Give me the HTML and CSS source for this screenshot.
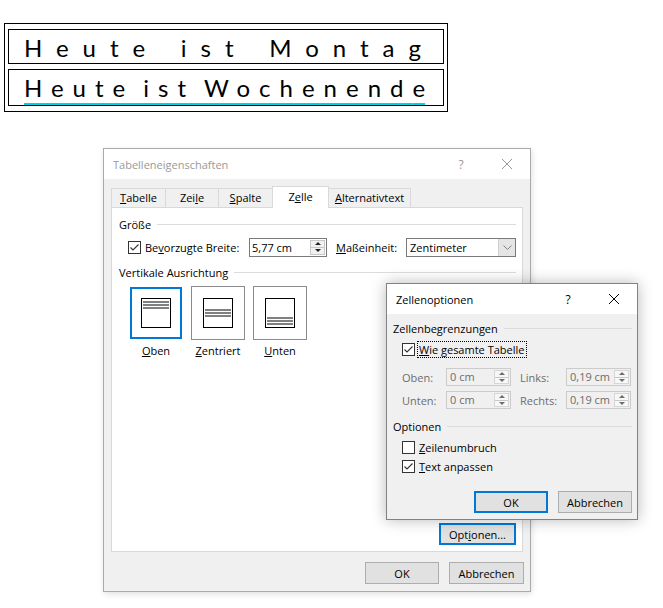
FILE: index.html
```html
<!DOCTYPE html>
<html lang="de">
<head>
<meta charset="utf-8">
<title>Tabelleneigenschaften</title>
<link rel="stylesheet" href="styles.css">
</head>
<body>
<table class="doc">
  <tr><td class="r1">Heute ist Monta<span class="tail">g</span></td></tr>
  <tr><td class="r2"><span class="ul">Heute ist Wochenend<span class="tail">e</span></span></td></tr>
</table>

<div class="dlg main">
  <div class="titlebar">
    <span class="title">Tabelleneigenschaften</span>
    <span class="tbtn help">?</span>
    <span class="tbtn close"><svg width="10" height="10" viewBox="0 0 10 10"><path d="M0 0L10 10M10 0L0 10" stroke="#999" stroke-width="1" fill="none"/></svg></span>
  </div>
  <div class="dbody">
    <div class="tabs">
      <div class="tab w55"><u>T</u>abelle</div>
      <div class="tab w54">Zei<u>l</u>e</div>
      <div class="tab w55"><u>S</u>palte</div>
      <div class="tab w57 sel">Z<u>e</u>lle</div>
      <div class="tab w83"><u>A</u>lternativtext</div>
    </div>
    <div class="panel">
      <div class="group first">Größe</div>
      <div class="sizerow">
        <span class="cb"><svg width="11" height="11" viewBox="0 0 11 11"><path d="M1.5 5.5L4 8L9.5 2.5" stroke="#333" stroke-width="1.1" fill="none"/></svg></span>
        <span class="lbl-breite">Be<u>v</u>orzugte Breite:</span>
        <span class="edit w78"><span class="val">5,77 cm</span><span class="spin"><i class="up"></i><i class="dn"></i></span></span>
        <span class="lbl-mass"><u>M</u>aßeinheit:</span>
        <span class="select"><span class="val">Zentimeter</span><span class="arrow"><svg width="9" height="5" viewBox="0 0 9 5"><path d="M0.5 0.5L4.5 4.5L8.5 0.5" stroke="#808080" stroke-width="1" fill="none"/></svg></span></span>
      </div>
      <div class="group second">Vertikale Ausrichtung</div>
      <div class="aligns">
        <div class="abtn sel"><div class="aicon top"><i></i><i></i><i></i></div></div>
        <div class="abtn"><div class="aicon mid"><i></i><i></i><i></i></div></div>
        <div class="abtn"><div class="aicon bot"><i></i><i></i><i></i></div></div>
        <div class="alabel"><u>O</u>ben</div>
        <div class="alabel"><u>Z</u>entriert</div>
        <div class="alabel"><u>U</u>nten</div>
      </div>
      <div class="btn default opt">Opt<u>i</u>onen...</div>
    </div>
    <div class="footer">
      <div class="btn w74">OK</div>
      <div class="btn w75">Abbrechen</div>
    </div>
  </div>
</div>

<div class="dlg sub">
  <div class="titlebar">
    <span class="title active">Zellenoptionen</span>
    <span class="tbtn help active">?</span>
    <span class="tbtn close"><svg width="10" height="10" viewBox="0 0 10 10"><path d="M0 0L10 10M10 0L0 10" stroke="#000" stroke-width="1" fill="none"/></svg></span>
  </div>
  <div class="sbody">
    <div class="group">Zellenbegrenzungen</div>
    <div class="cbrow focusrow">
      <span class="cb"><svg width="11" height="11" viewBox="0 0 11 11"><path d="M1.5 5.5L4 8L9.5 2.5" stroke="#333" stroke-width="1.1" fill="none"/></svg></span>
      <span class="focus"><u>W</u>ie gesamte Tabelle</span>
    </div>
    <div class="margins">
      <span class="ml">Oben:</span>
      <span class="edit dis"><span class="val">0 cm</span><span class="spin"><i class="up"></i><i class="dn"></i></span></span>
      <span class="ml ml2">Links:</span>
      <span class="edit dis"><span class="val">0,19 cm</span><span class="spin"><i class="up"></i><i class="dn"></i></span></span>
      <span class="ml">Unten:</span>
      <span class="edit dis"><span class="val">0 cm</span><span class="spin"><i class="up"></i><i class="dn"></i></span></span>
      <span class="ml ml2">Rechts:</span>
      <span class="edit dis"><span class="val">0,19 cm</span><span class="spin"><i class="up"></i><i class="dn"></i></span></span>
    </div>
    <div class="group g2">Optionen</div>
    <div class="cbrow r-wrap">
      <span class="cb"></span>
      <span class="cbl"><u>Z</u>eilenumbruch</span>
    </div>
    <div class="cbrow r-fit">
      <span class="cb"><svg width="11" height="11" viewBox="0 0 11 11"><path d="M1.5 5.5L4 8L9.5 2.5" stroke="#333" stroke-width="1.1" fill="none"/></svg></span>
      <span class="cbl"><u>T</u>ext anpassen</span>
    </div>
    <div class="sfooter">
      <div class="btn default w74">OK</div>
      <div class="btn w74">Abbrechen</div>
    </div>
  </div>
</div>
</body>
</html>
```

FILE: styles.css
```css
* { box-sizing: border-box; }
html, body { margin: 0; padding: 0; background: #fff; }
body {
  width: 663px;
  height: 608px;
  overflow: hidden;
  position: relative;
  font-family: "Open Sans", "Noto Sans", sans-serif;
  font-size: 11px;
  color: #000;
}
u { text-decoration: underline; text-underline-offset: 1px; }

/* Word document table */
.doc {
  margin: 23px 0 0 4px;
  width: 444px;
  border: 1px solid #000;
  border-spacing: 3px 5px;
  font-family: Lato, "Liberation Sans", sans-serif;
  font-size: 24px;
  color: #000;
}
.doc td { border: 1px solid #000; white-space: nowrap; }
.doc .r1 {
  padding: 2px 0 0 15px;
  line-height: 31px;
  letter-spacing: 14px;
  word-spacing: 1.5px;
}
.doc .r2 {
  padding: 3px 0 3px 15px;
  line-height: 29px;
  letter-spacing: 9px;
  word-spacing: -6px;
}
.doc .tail { letter-spacing: 0; }
.doc .ul {
  text-decoration: underline 2px #00d4e4;
  text-underline-offset: 6px;
  text-decoration-skip-ink: none;
}

/* dialogs */
.dlg { background: #f0f0f0; display: flex; flex-direction: column; }
.main {
  margin: 36px 0 0 103px;
  width: 428px;
  height: 444px;
  border: 1px solid #aaaaaa;
  box-shadow: 1px 2px 6px rgba(0,0,0,0.12);
}
.sub {
  position: absolute;
  left: 386px;
  top: 283px;
  width: 252px;
  height: 237px;
  border: 1px solid #828282;
  box-shadow: 0 0 14px rgba(0,0,0,0.28);
}
.titlebar {
  flex: none;
  height: 30px;
  background: #fff;
  display: flex;
  align-items: center;
}
.title { flex: 1; padding-left: 9px; color: #999; }
.title.active { color: #000; }
.tbtn {
  width: 46px;
  height: 30px;
  display: flex;
  align-items: center;
  justify-content: center;
  color: #999;
  font-size: 12px;
}
.tbtn.active { color: #000; }

.dbody { flex: 1; display: flex; flex-direction: column; padding: 7px 7px 7px 7px; }

/* tabs */
.tabs { display: flex; align-items: flex-end; height: 21px; position: relative; z-index: 1; flex: none; }
.tab {
  height: 19px;
  border: 1px solid #d9d9d9;
  border-bottom: none;
  background: #f0f0f0;
  margin-left: -1px;
  text-align: center;
  line-height: 18px;
}
.tab:first-child { margin-left: 0; }
.tab.sel {
  height: 22px;
  background: #fff;
  margin-bottom: -1px;
  position: relative;
  z-index: 2;
  line-height: 20px;
}
.w54 { width: 54px; }
.w55 { width: 55px; }
.w57 { width: 57px; }
.w74 { width: 74px; }
.w75 { width: 75px; }
.w78 { width: 78px; }
.w83 { width: 83px; }

.panel {
  flex: none;
  height: 345px;
  background: #fff;
  border: 1px solid #d9d9d9;
  display: flex;
  flex-direction: column;
  padding: 0 6px 6px 7px;
}

.group {
  display: flex;
  align-items: center;
  gap: 6px;
  height: 15px;
  line-height: 15px;
  flex: none;
}
.group::after { content: ""; flex: 1; height: 1px; background: #dcdcdc; }
.group.first { margin-top: 9px; }
.group.second { margin-top: 8px; }

.sizerow { display: flex; align-items: center; height: 20px; margin: 5px 0 0 9px; }
.cb {
  width: 13px;
  height: 13px;
  border: 1px solid #333;
  background: #fff;
  flex: none;
  display: flex;
  align-items: center;
  justify-content: center;
}
.lbl-breite { width: 104px; margin-left: 4px; }
.lbl-mass { width: 70px; margin-left: 9px; }

.edit {
  height: 19px;
  border: 1px solid #7a7a7a;
  background: #fff;
  display: flex;
  align-items: stretch;
}
.edit .val { flex: 1; padding-left: 2px; line-height: 17px; white-space: nowrap; }
.spin {
  width: 15px;
  margin: 1px 1px 1px 0;
  background: #f0f0f0;
  border: 1px solid #c8c8c8;
  display: flex;
  flex-direction: column;
}
.spin i {
  flex: 1;
  display: flex;
  align-items: center;
  justify-content: center;
}
.spin i + i { border-top: 1px solid #c8c8c8; }
.spin i::before {
  content: "";
  width: 0;
  height: 0;
  border-left: 3px solid transparent;
  border-right: 3px solid transparent;
}
.spin .up::before { border-bottom: 3px solid #222; }
.spin .dn::before { border-top: 3px solid #222; }

.select {
  width: 110px;
  height: 19px;
  border: 1px solid #7a7a7a;
  background: #fff;
  display: flex;
}
.select .val { flex: 1; padding-left: 3px; line-height: 17px; }
.select .arrow {
  width: 17px;
  background: #e5e5e5;
  border-left: 1px solid #cfcfcf;
  display: flex;
  align-items: center;
  justify-content: center;
}

/* vertical alignment buttons */
.aligns {
  display: grid;
  grid-template-columns: 54px 54px 54px;
  column-gap: 8px;
  row-gap: 3px;
  margin: 6px 0 0 10px;
}
.abtn {
  width: 54px;
  height: 54px;
  border: 1px solid #8c8c8c;
  display: flex;
  align-items: center;
  justify-content: center;
}
.abtn.sel { border-color: #fff; box-shadow: inset 0 0 0 2px #0078d7; }
.aicon {
  width: 30px;
  height: 30px;
  border: 1px solid #000;
  background: #fff;
  display: flex;
  flex-direction: column;
  gap: 1px;
  padding: 2px 1px;
}
.aicon.mid { justify-content: center; }
.aicon.bot { justify-content: flex-end; }
.aicon i { display: block; height: 2px; background: #808080; }
.alabel { text-align: center; line-height: 15px; }

/* buttons */
.btn {
  height: 22px;
  border: 1px solid #adadad;
  background: #e1e1e1;
  display: flex;
  align-items: center;
  justify-content: center;
  flex: none;
}
.btn.default { border: 2px solid #0078d7; }
.opt { width: 77px; margin-top: auto; align-self: flex-end; }
.footer { display: flex; justify-content: flex-end; gap: 10px; margin: 10px -1px 0 0; }

/* Zellenoptionen body */
.sbody { flex: 1; display: flex; flex-direction: column; padding: 7px 5px 6px 6px; }
.cbrow { display: flex; align-items: center; margin-left: 9px; flex: none; }
.focusrow { height: 18px; margin-top: 4px; }
.focus {
  margin-left: 2px;
  height: 17px;
  line-height: 15px;
  border: 1px dotted #000;
  padding: 0 2px 0 1px;
}
.margins {
  display: grid;
  grid-template-columns: 44px 65px 55px 65px;
  grid-auto-rows: 18px;
  row-gap: 5px;
  align-items: center;
  margin: 10px 0 0 9px;
}
.ml { color: #6d6d6d; }
.ml2 { padding-left: 9px; }
.edit.dis { height: 18px; border-color: #cccccc; background: #f0f0f0; color: #6d6d6d; }
.edit.dis .val { padding-left: 3px; line-height: 16px; }
.edit.dis .spin { background: #f7f7f7; border-color: #d6d6d6; }
.edit.dis .spin .up::before { border-bottom-color: #6d6d6d; }
.edit.dis .spin .dn::before { border-top-color: #6d6d6d; }
.g2 { margin-top: 10px; }
.r-wrap { height: 16px; margin-top: 5px; }
.r-fit { height: 16px; margin-top: 3px; }
.cbl { margin-left: 4px; }
.sfooter { margin-top: auto; display: flex; justify-content: flex-end; gap: 10px; }
```
